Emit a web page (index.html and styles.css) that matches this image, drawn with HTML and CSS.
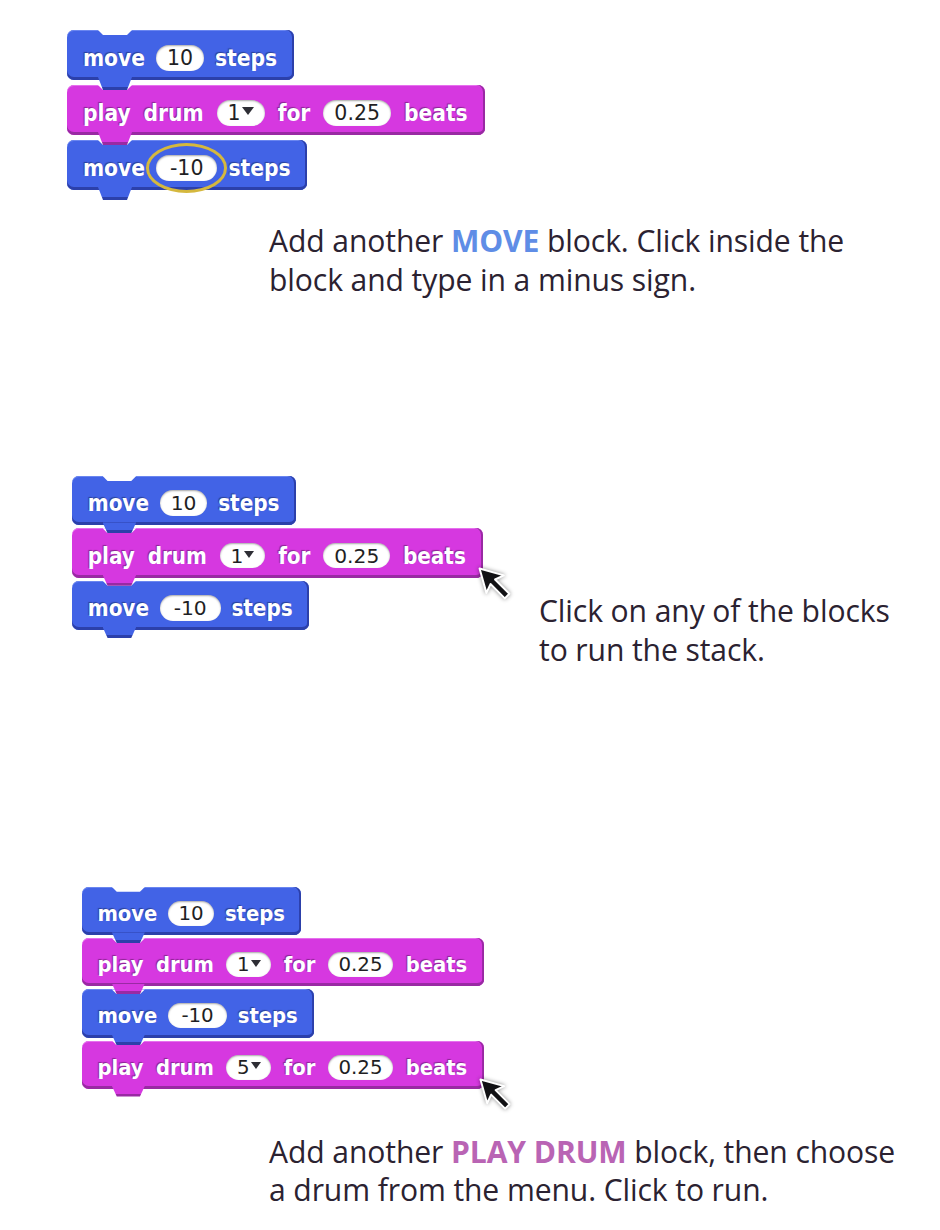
FILE: index.html
```html
<!DOCTYPE html>
<html lang="en">
<head>
<meta charset="utf-8">
<title>Move and play drum</title>
<link rel="stylesheet" href="styles.css">
</head>
<body>
<main class="page">

  <section class="step step-1">
    <div class="stack stack-1">
      <div class="block motion">
        <span class="label">move</span><span class="num">10</span><span class="label">steps</span>
      </div>
      <div class="block sound">
        <span class="label">play</span><span class="label">drum</span><span class="num menu">1<i class="arrow"></i></span><span class="label">for</span><span class="num">0.25</span><span class="label">beats</span>
      </div>
      <div class="block motion">
        <span class="label">move</span><span class="num neg ring">-10</span><span class="label">steps</span>
      </div>
    </div>
    <p class="caption caption-1">Add another <b class="kw-move">MOVE</b> block. Click inside the<br>block and type in a minus sign.</p>
  </section>

  <section class="step step-2">
    <div class="stack-wrap">
      <div class="stack stack-2">
        <div class="block motion">
          <span class="label">move</span><span class="num">10</span><span class="label">steps</span>
        </div>
        <div class="block sound">
          <span class="label">play</span><span class="label">drum</span><span class="num menu">1<i class="arrow"></i></span><span class="label">for</span><span class="num">0.25</span><span class="label">beats</span>
          <svg class="cursor" viewBox="0 0 26 26" aria-hidden="true"><path d="M3 3 L19 7.5 L13.2 10.2 L22.6 19.6 L19.6 22.6 L10.2 13.2 L7.5 19 Z"/></svg>
        </div>
        <div class="block motion">
          <span class="label">move</span><span class="num neg">-10</span><span class="label">steps</span>
        </div>
      </div>
    </div>
    <p class="caption caption-2">Click on any of the blocks<br>to run the stack.</p>
  </section>

  <section class="step step-3">
    <div class="stack stack-3">
      <div class="block motion">
        <span class="label">move</span><span class="num">10</span><span class="label">steps</span>
      </div>
      <div class="block sound">
        <span class="label">play</span><span class="label">drum</span><span class="num menu">1<i class="arrow"></i></span><span class="label">for</span><span class="num">0.25</span><span class="label">beats</span>
      </div>
      <div class="block motion">
        <span class="label">move</span><span class="num neg">-10</span><span class="label">steps</span>
      </div>
      <div class="block sound">
        <span class="label">play</span><span class="label">drum</span><span class="num menu">5<i class="arrow"></i></span><span class="label">for</span><span class="num">0.25</span><span class="label">beats</span>
        <svg class="cursor" viewBox="0 0 26 26" aria-hidden="true"><path d="M3 3 L19 7.5 L13.2 10.2 L22.6 19.6 L19.6 22.6 L10.2 13.2 L7.5 19 Z"/></svg>
      </div>
    </div>
    <p class="caption caption-3">Add another <b class="kw-drum">PLAY DRUM</b> block, then choose<br>a drum from the menu. Click to run.</p>
  </section>

</main>
</body>
</html>
```

FILE: styles.css
```css
html, body {
  margin: 0;
  padding: 0;
  background: #ffffff;
}

.page {
  width: 940px;
  min-height: 1230px;
}

p { margin: 0; }

/* ---------- sections ---------- */
.step-1 {
  padding: 30px 0 0 67px;
}

.caption-1 {
  margin: 32px 0 0 202px;
}

.step-2 {
  display: flex;
  align-items: flex-start;
  margin-top: 177px;
  padding-left: 72px;
}

.stack-wrap {
  width: 467px;
  flex: none;
}

.caption-2 {
  margin-top: 116px;
}

.step-3 {
  margin-top: 218px;
  padding-left: 82px;
}

.caption-3 {
  margin: 44px 0 0 187px;
}

/* ---------- captions ---------- */
.caption {
  font-family: "Open Sans", "Noto Sans", sans-serif;
  font-size: 30.1px;
  line-height: 38.5px;
  color: #2b2231;
  letter-spacing: -0.1px;
}

.caption b { font-weight: 700; }
.kw-move { color: #5f8de6; }
.kw-drum { color: #b964b4; }

/* ---------- block stacks ---------- */
.stack {
  display: flex;
  flex-direction: column;
  align-items: flex-start;
  --gap: 5px;
  gap: var(--gap);
}

.stack-2 { zoom: 0.988; --gap: 3px; }
.stack-3 { zoom: 0.966; --gap: 3px; }

.block {
  position: relative;
  display: flex;
  align-items: center;
  gap: 11px;
  box-sizing: border-box;
  height: 50px;
  padding: 5px 17px 0 16px;
  border-radius: 7px;
  background: var(--fill);
  box-shadow:
    inset 0 -3px 0 var(--edge),
    inset -2px 0 0 var(--edge),
    inset 0 1px 0 var(--light);
}

.motion {
  --fill: #4263e6;
  --edge: #2c40aa;
  --light: #6a86f0;
}

.sound {
  --fill: #d638e0;
  --edge: #992aa3;
  --light: #e670ee;
  gap: 13px;
}

/* notch cut into the top edge */
.block::before {
  content: "";
  position: absolute;
  top: 0;
  left: 31px;
  width: 34px;
  height: 5px;
  background: #ffffff;
  clip-path: polygon(0 0, 100% 0, calc(100% - 5px) 100%, 5px 100%);
  z-index: 1;
}

/* tab hanging from the bottom edge */
.block::after {
  content: "";
  position: absolute;
  left: 31px;
  width: 34px;
  top: calc(100% - 3px);
  height: calc(8px + var(--gap));
  background: linear-gradient(var(--fill) calc(100% - 3px), var(--edge) 0);
  clip-path: polygon(0 0, 100% 0, calc(100% - 5px) 100%, 5px 100%);
  z-index: 2;
}

.label {
  font-family: "DejaVu Sans Condensed", "DejaVu Sans", sans-serif;
  font-stretch: condensed;
  font-weight: 700;
  font-size: 22.5px;
  color: #ffffff;
  text-shadow: -1px -1px 1px rgba(0, 0, 0, 0.35);
  white-space: nowrap;
}

.num {
  display: flex;
  align-items: center;
  height: 26px;
  padding: 0 11px;
  border-radius: 13px;
  background: #ffffff;
  box-shadow: inset 0 1px 2px rgba(0, 0, 0, 0.35);
  font-family: "DejaVu Sans", "Liberation Sans", sans-serif;
  font-size: 20.5px;
  color: #1f1f24;
  white-space: nowrap;
}

.sound .num { padding: 0 11px; }
.num.neg { padding: 0 14px; }

.menu .arrow {
  display: block;
  width: 0;
  height: 0;
  margin: -3px 0 0 1px;
  border-left: 6px solid transparent;
  border-right: 6px solid transparent;
  border-top: 8px solid #2e2e35;
}

/* yellow highlight ring around the edited input */
.ring { position: relative; }
.ring::after {
  content: "";
  position: absolute;
  left: -10px;
  right: -10px;
  top: -12px;
  bottom: -12px;
  border: 3px solid #d5b83e;
  border-radius: 50%;
  z-index: 5;
}

/* mouse pointer */
.cursor {
  position: absolute;
  left: calc(100% - 8px);
  top: calc(100% - 14px);
  width: 40px;
  height: 40px;
  z-index: 6;
  overflow: visible;
  filter: drop-shadow(0 0 2px rgba(0, 0, 0, 0.45));
}

.cursor path {
  fill: #111114;
  stroke: #ffffff;
  stroke-width: 1.3;
  stroke-linejoin: round;
}
```
